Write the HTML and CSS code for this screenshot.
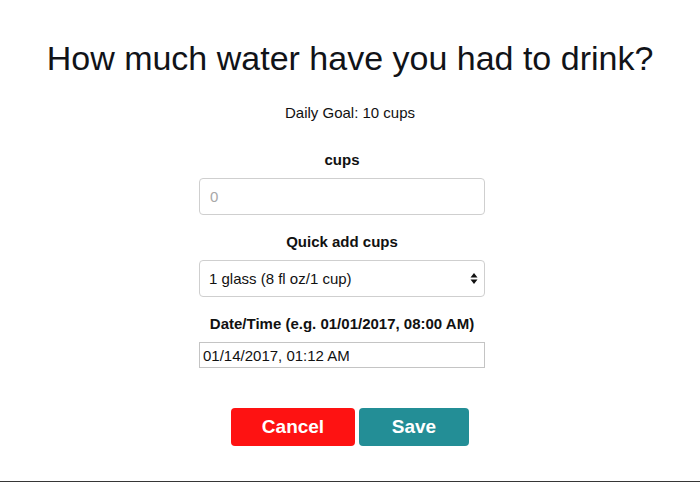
FILE: index.html
```html
<!DOCTYPE html>
<html>
<head>
<meta charset="utf-8">
<title>Water</title>
<link rel="stylesheet" href="styles.css">
</head>
<body>
<div class="page">
  <h1 class="title">How much water have you had to drink?</h1>
  <p class="goal">Daily Goal: 10 cups</p>
  <form class="form">
    <div class="fields">
      <div class="field">
        <label class="label">cups</label>
        <input class="control" type="text" placeholder="0">
      </div>
      <div class="field">
        <label class="label">Quick add cups</label>
        <div class="select-wrap">
          <select class="control select">
            <option>1 glass (8 fl oz/1 cup)</option>
          </select>
          <svg class="arrows" width="8" height="11" viewBox="0 0 8 11"><path d="M4 0 L7.5 4.5 H0.5 Z M4 11 L7.5 6.5 H0.5 Z" fill="#111"/></svg>
        </div>
      </div>
      <div class="field">
        <label class="label">Date/Time (e.g. 01/01/2017, 08:00 AM)</label>
        <input class="date" type="text" value="01/14/2017, 01:12 AM">
      </div>
    </div>
    <div class="buttons">
      <button type="button" class="btn btn-cancel">Cancel</button>
      <button type="button" class="btn btn-save">Save</button>
    </div>
  </form>
</div>
</body>
</html>
```

FILE: styles.css
```css
html, body {
  margin: 0;
  padding: 0;
  background: #fff;
}
body {
  font-family: "Liberation Sans", Arial, sans-serif;
  font-size: 15px;
  color: #111;
}
.page {
  box-sizing: border-box;
  height: 482px;
  padding-top: 39px;
  border-bottom: 1px solid #363636;
  display: flex;
  flex-direction: column;
  align-items: center;
  text-align: center;
}
.title {
  margin: 0;
  font-size: 34px;
  line-height: 38px;
  font-weight: normal;
  color: #111318;
}
.goal {
  margin: 26px 0 0;
  line-height: 20px;
}
.form {
  margin-top: 27px;
  display: flex;
  flex-direction: column;
  align-items: center;
}
.fields {
  display: flex;
  flex-direction: column;
  align-items: center;
  gap: 17px;
  margin-right: 16px;
}
.field {
  display: flex;
  flex-direction: column;
  align-items: center;
}
.label {
  font-weight: bold;
  line-height: 20px;
  margin-bottom: 8px;
}
.control {
  box-sizing: border-box;
  width: 286px;
  height: 37px;
  border: 1px solid #cfcfcf;
  border-radius: 4px;
  padding: 0 10px;
  font-family: "Liberation Sans", Arial, sans-serif;
  font-size: 15px;
  color: #111;
  background: #fff;
  outline: none;
}
.control::placeholder {
  color: #a8a8a8;
}
.select-wrap {
  position: relative;
}
.select {
  -webkit-appearance: none;
  appearance: none;
  padding-left: 9px;
}
.arrows {
  position: absolute;
  right: 7px;
  top: 13px;
  pointer-events: none;
}
.date {
  box-sizing: border-box;
  width: 286px;
  height: 26px;
  border: 1px solid #c4c4c4;
  border-radius: 0;
  padding: 0 3px;
  font-family: "Liberation Sans", Arial, sans-serif;
  font-size: 15px;
  color: #111;
  outline: none;
}
.buttons {
  margin-top: 40px;
  display: flex;
  gap: 4px;
}
.btn {
  height: 38px;
  border: none;
  border-radius: 4px;
  color: #fff;
  font-family: "Liberation Sans", Arial, sans-serif;
  font-weight: bold;
  font-size: 19px;
  padding: 0;
}
.btn-cancel {
  width: 124px;
  background: #fe1212;
}
.btn-save {
  width: 110px;
  background: #238e96;
}
```
